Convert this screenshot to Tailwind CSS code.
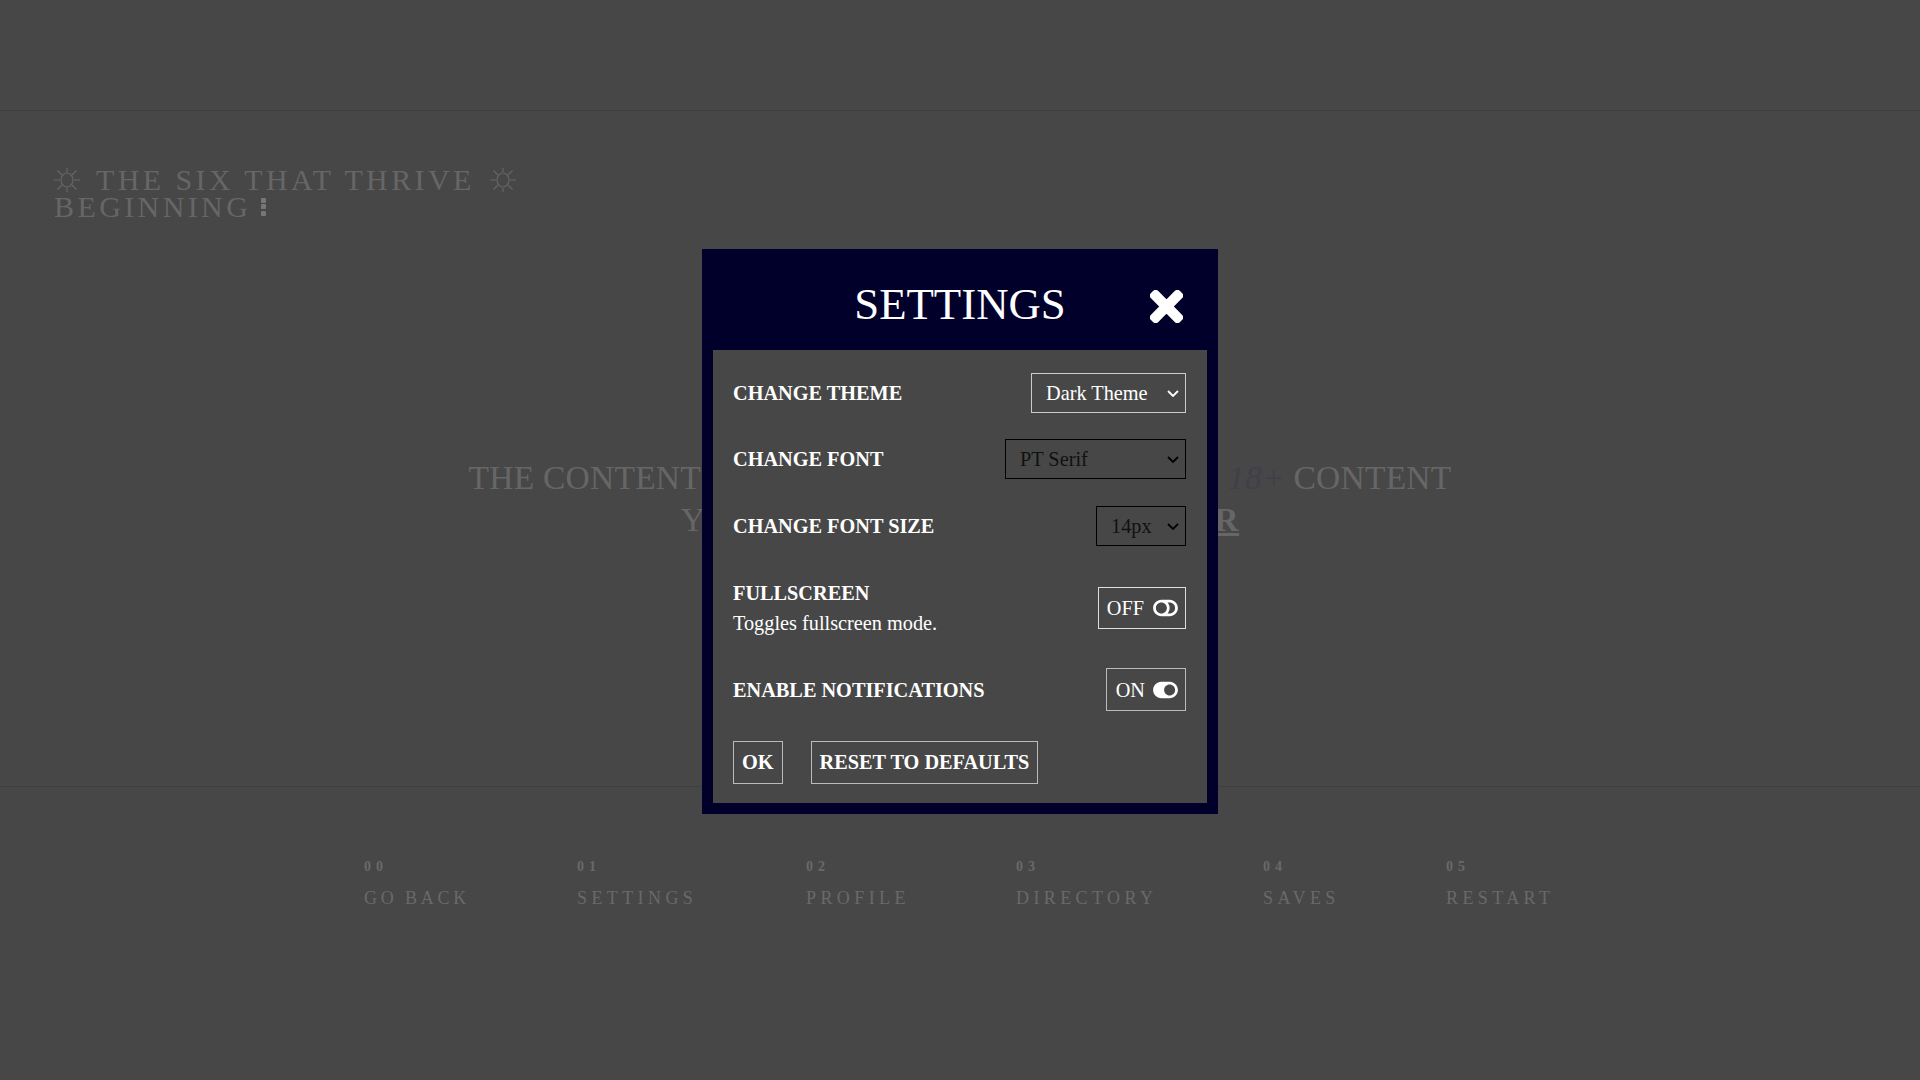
<!DOCTYPE html>
<html lang="en">
<head>
    <meta charset="UTF-8">
    <meta name="viewport" content="width=device-width, initial-scale=1.0">
    <title>Settings</title>
    <script src="https://cdn.jsdelivr.net/npm/@tailwindcss/browser@4"></script>
</head>
<body class="relative h-[1080px] overflow-hidden bg-[#474747] font-['Liberation_Serif',serif] text-[#666666]">

    <!-- page behind the dialog -->
    <header class="h-[111px] border-b border-[#3e3e48]"></header>

    <main class="h-[676px] border-b border-[#3e3e48]">
        <h1 class="pt-[55px] pl-[54px] text-[30px] leading-[27px] tracking-[3.400px]">
            <span class="flex items-center">
                <svg class="mr-[16px] w-[26px] h-[24px]" viewBox="0 0 26 24" fill="none" stroke="currentColor" stroke-width="1.2"><ellipse cx="13" cy="12" rx="6" ry="7"/><path d="M13 0v4M13 20v4M0 12h6M20 12h6M3.500 2.500l4.500 4.500M22.500 2.500l-4.500 4.500M3.500 21.500l4.500-4.500M22.500 21.500l-4.500-4.500"/></svg>
                <span>THE SIX THAT THRIVE</span>
                <svg class="ml-[15px] w-[26px] h-[24px]" viewBox="0 0 26 24" fill="none" stroke="currentColor" stroke-width="1.2"><ellipse cx="13" cy="12" rx="6" ry="7"/><path d="M13 0v4M13 20v4M0 12h6M20 12h6M3.500 2.500l4.500 4.500M22.500 2.500l-4.500 4.500M3.500 21.500l4.500-4.500M22.500 21.500l-4.500-4.500"/></svg>
            </span>
            <span class="flex items-center">
                <span>BEGINNING</span>
                <span class="ml-[10px] flex flex-col gap-[1.500px]">
                    <span class="block size-[5px] rounded-[1px] bg-[#777777]"></span>
                    <span class="block size-[5px] rounded-[1px] bg-[#777777]"></span>
                    <span class="block size-[5px] rounded-[1px] bg-[#777777]"></span>
                </span>
            </span>
        </h1>
        <div class="mt-[237px] text-center text-[33.6px] leading-[42px] tracking-[0.2px]">
            <p>THE CONTENT OF THE STORIES MAY CONTAIN <em class="ml-[6px] text-[#40404a]">18+</em> CONTENT</p>
            <p class="tracking-[0.55px]">YOU MUST BE OVER 18 TO <a class="font-bold underline">ENTER</a></p>
        </div>
    </main>

    <nav class="flex pt-[71px] pl-[364px] text-[#696969]">
        <a class="block w-[213px]"><span class="block text-[14px] leading-[18px] font-bold tracking-[5px]">00</span><span class="mt-[10px] block text-[18px] leading-[24px] tracking-[3.800px] [word-spacing:-1px]">GO BACK</span></a>
        <a class="block w-[229px]"><span class="block text-[14px] leading-[18px] font-bold tracking-[5px]">01</span><span class="mt-[10px] block text-[18px] leading-[24px] tracking-[4.400px]">SETTINGS</span></a>
        <a class="block w-[210px]"><span class="block text-[14px] leading-[18px] font-bold tracking-[5px]">02</span><span class="mt-[10px] block text-[18px] leading-[24px] tracking-[4.400px]">PROFILE</span></a>
        <a class="block w-[247px]"><span class="block text-[14px] leading-[18px] font-bold tracking-[5px]">03</span><span class="mt-[10px] block text-[18px] leading-[24px] tracking-[4.400px]">DIRECTORY</span></a>
        <a class="block w-[183px]"><span class="block text-[14px] leading-[18px] font-bold tracking-[5px]">04</span><span class="mt-[10px] block text-[18px] leading-[24px] tracking-[4.400px]">SAVES</span></a>
        <a class="block"><span class="block text-[14px] leading-[18px] font-bold tracking-[5px]">05</span><span class="mt-[10px] block text-[18px] leading-[24px] tracking-[4.400px]">RESTART</span></a>
    </nav>

    <!-- settings dialog -->
    <div class="absolute inset-0 flex justify-center pt-[249px]">
        <div class="w-[516px] h-[565px] bg-[#00002b] px-[11px] pb-[11px] text-white">
            <div class="relative h-[101px] flex items-center justify-center">
                <h2 class="text-[44.800px] leading-none pt-[10px]">SETTINGS</h2>
                <svg class="absolute right-[24px] top-[41px] w-[33px] h-[33px] fill-white stroke-white stroke-[22px] [stroke-linejoin:round]" viewBox="-10 70 372 372"><path d="M242.72 256l100.07-100.07c12.28-12.28 12.28-32.19 0-44.48l-22.24-22.24c-12.28-12.28-32.19-12.28-44.48 0L176 189.28 75.93 89.21c-12.28-12.28-32.19-12.28-44.48 0L9.21 111.45c-12.28 12.28-12.28 32.19 0 44.48L109.28 256 9.21 356.07c-12.28 12.28-12.28 32.19 0 44.48l22.24 22.24c12.28 12.28 32.2 12.28 44.48 0L176 322.72l100.07 100.07c12.28 12.28 32.2 12.28 44.48 0l22.24-22.24c12.28-12.28 12.28-32.19 0-44.48L242.72 256z"/></svg>
            </div>
            <div class="h-[453px] bg-[#474747] pl-[20px] pr-[21px] pt-[23px] text-[20.300px] leading-[28px]">
                <div class="flex h-[40px] items-center justify-between">
                    <label class="font-bold">CHANGE THEME</label>
                    <div class="relative">
                        <select class="block h-[40px] w-[155px] appearance-none border border-[#cccccc] pl-[14px] text-white">
                            <option>Dark Theme</option>
                        </select>
                        <svg class="absolute right-[7px] top-[17px] w-[12px] h-[7px] pointer-events-none" viewBox="0 0 12 7" fill="none" stroke="#ffffff" stroke-width="1.800"><path d="M1 1l5 5 5-5"/></svg>
                    </div>
                </div>
                <div class="mt-[26px] flex h-[40px] items-center justify-between">
                    <label class="font-bold">CHANGE FONT</label>
                    <div class="relative">
                        <select class="block h-[40px] w-[181px] appearance-none border border-black pl-[14px] text-[#111111]">
                            <option>PT Serif</option>
                        </select>
                        <svg class="absolute right-[7px] top-[17px] w-[12px] h-[7px] pointer-events-none" viewBox="0 0 12 7" fill="none" stroke="#000000" stroke-width="1.800"><path d="M1 1l5 5 5-5"/></svg>
                    </div>
                </div>
                <div class="mt-[27px] flex h-[40px] items-center justify-between">
                    <label class="font-bold">CHANGE FONT SIZE</label>
                    <div class="relative">
                        <select class="block h-[40px] w-[90px] appearance-none border border-black pl-[14px] text-[#111111]">
                            <option>14px</option>
                        </select>
                        <svg class="absolute right-[7px] top-[17px] w-[12px] h-[7px] pointer-events-none" viewBox="0 0 12 7" fill="none" stroke="#000000" stroke-width="1.800"><path d="M1 1l5 5 5-5"/></svg>
                    </div>
                </div>
                <div class="mt-[32px] flex items-center justify-between">
                    <div>
                        <div class="font-bold leading-[30px]">FULLSCREEN</div>
                        <div class="leading-[30px]">Toggles fullscreen mode.</div>
                    </div>
                    <button class="flex h-[42px] items-center gap-[9px] border border-[#dddddd] pl-[8px] pr-[7px]">
                        OFF
                        <svg class="w-[25px] h-[22px] fill-white" viewBox="0 0 576 512"><path d="M384 64H192C85.961 64 0 149.961 0 256s85.961 192 192 192h192c106.039 0 192-85.961 192-192S490.039 64 384 64zM64 256c0-70.741 57.249-128 128-128 70.741 0 128 57.249 128 128 0 70.741-57.249 128-128 128-70.741 0-128-57.249-128-128zm320 128h-48.905c65.217-72.858 65.236-183.12 0-256H384c70.651 0 128 57.236 128 128 0 70.643-57.236 128-128 128z"/></svg>
                    </button>
                </div>
                <div class="mt-[30px] flex items-center justify-between">
                    <label class="font-bold">ENABLE NOTIFICATIONS</label>
                    <button class="flex h-[43px] items-center gap-[8px] border border-[#bbbbbb] pl-[9px] pr-[7px]">
                        ON
                        <svg class="w-[25px] h-[22px] fill-white" viewBox="0 0 576 512"><path d="M384 64H192C86 64 0 150 0 256s86 192 192 192h192c106 0 192-86 192-192S490 64 384 64zm0 320c-70.800 0-128-57.300-128-128 0-70.800 57.300-128 128-128 70.800 0 128 57.300 128 128 0 70.800-57.300 128-128 128z"/></svg>
                    </button>
                </div>
                <div class="mt-[30px] flex gap-[28px]">
                    <button class="h-[43px] border border-[#bbbbbb] px-[8px] pb-[1px] font-bold">OK</button>
                    <button class="h-[43px] border border-[#bbbbbb] px-[8px] pb-[1px] font-bold">RESET TO DEFAULTS</button>
                </div>
            </div>
        </div>
    </div>
</body>
</html>
